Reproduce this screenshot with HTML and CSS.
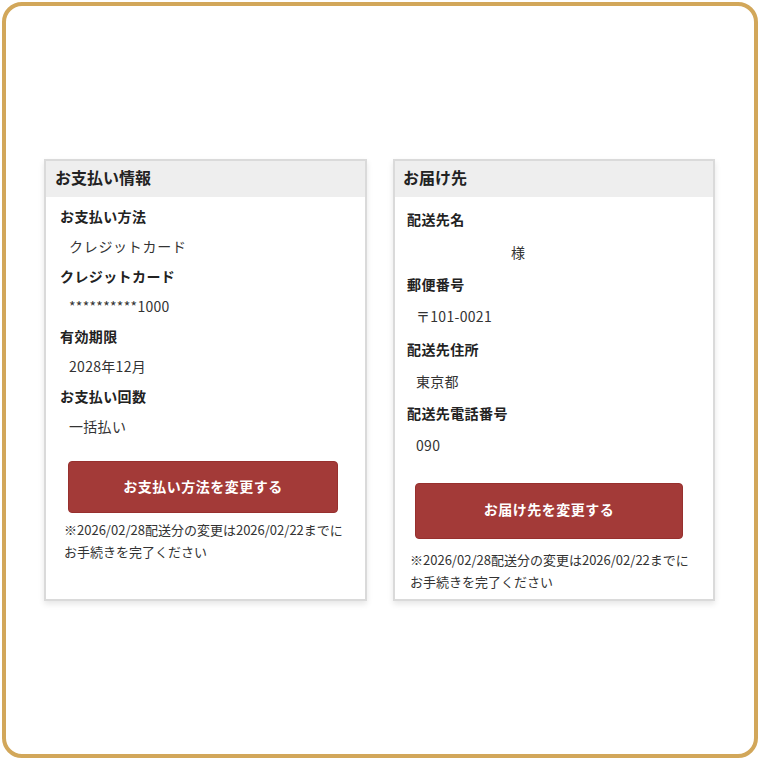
FILE: index.html
```html
<!DOCTYPE html>
<html lang="ja">
<head>
<meta charset="utf-8">
<link rel="stylesheet" href="styles.css">
</head>
<body>
<div class="frame">
  <div class="cards">
    <section class="card card--payment">
      <h2 class="card-head">お支払い情報</h2>
      <div class="card-body">
        <dl class="info">
          <dt>お支払い方法</dt>
          <dd class="kana">クレジットカード</dd>
          <dt>クレジットカード</dt>
          <dd>**********1000</dd>
          <dt>有効期限</dt>
          <dd>2028年12月</dd>
          <dt>お支払い回数</dt>
          <dd>一括払い</dd>
        </dl>
        <button class="btn" type="button">お支払い方法を変更する</button>
        <p class="note">※2026/02/28配送分の変更は2026/02/22までに<br>お手続きを完了ください</p>
      </div>
    </section>
    <section class="card card--delivery">
      <h2 class="card-head">お届け先</h2>
      <div class="card-body">
        <dl class="info">
          <dt>配送先名</dt>
          <dd><span class="name-blank"></span>様</dd>
          <dt>郵便番号</dt>
          <dd>〒101-0021</dd>
          <dt>配送先住所</dt>
          <dd>東京都</dd>
          <dt>配送先電話番号</dt>
          <dd>090</dd>
        </dl>
        <button class="btn" type="button">お届け先を変更する</button>
        <p class="note">※2026/02/28配送分の変更は2026/02/22までに<br>お手続きを完了ください</p>
      </div>
    </section>
  </div>
</div>
</body>
</html>
```

FILE: styles.css
```css
html, body {
  margin: 0;
  padding: 0;
  background: #ffffff;
}
body {
  font-family: "Noto Sans CJK JP", "Noto Sans", sans-serif;
  color: #333333;
}
.frame {
  box-sizing: border-box;
  margin: 2px;
  width: 756px;
  height: 756px;
  border: 4px solid #d2a75a;
  border-radius: 20px;
  display: flex;
  align-items: center;
  justify-content: center;
}
.cards {
  display: grid;
  grid-template-columns: 323px 322px;
  column-gap: 26px;
  margin-left: -1px;
}
.card {
  box-sizing: border-box;
  border: 2px solid #dadada;
  background: #fff;
  box-shadow: 0 3px 6px rgba(0, 0, 0, 0.10);
  display: flex;
  flex-direction: column;
}
.card-head {
  margin: 0;
  background: #eeeeee;
  font-size: 16px;
  font-weight: 700;
  color: #222;
  height: 36px;
  line-height: 33px;
  padding-left: 9px;
}
.card--delivery .card-head {
  padding-left: 8px;
}
.card-body {
  display: flex;
  flex-direction: column;
}
.info {
  margin: 0;
}
.info dt {
  font-size: 14px;
  font-weight: 700;
  color: #222;
  letter-spacing: 0.4px;
}
.info dd {
  margin: 0;
  padding-left: 9px;
  font-size: 14px;
  color: #333;
  letter-spacing: 0.3px;
}
.info dd.kana {
  letter-spacing: 0.7px;
}
.btn {
  box-sizing: border-box;
  border: 1px solid #97302e;
  background: #a33a38;
  color: #fff;
  font-family: inherit;
  font-size: 14px;
  font-weight: 700;
  letter-spacing: 0.5px;
  border-radius: 4px;
  padding: 0 0 3px;
}
.note {
  margin: 0;
  font-size: 13px;
  line-height: 22px;
  color: #333;
}

/* payment card */
.card--payment .card-body {
  padding: 4px 0 0 14px;
}
.card--payment .info dt,
.card--payment .info dd {
  line-height: 30px;
}
.card--payment .btn {
  margin: 20px 0 0 8px;
  width: 270px;
  height: 52px;
}
.card--payment .note {
  margin: 6px 0 0 4px;
}

/* delivery card */
.card--delivery .card-body {
  padding: 6px 0 6px 12px;
}
.card--delivery .info dt,
.card--delivery .info dd {
  line-height: 32.3px;
}
.card--delivery .btn {
  margin: 21px 0 0 8px;
  width: 268px;
  height: 56px;
}
.card--delivery .note {
  margin: 10px 0 0 3px;
}
.name-blank {
  display: inline-block;
  width: 95px;
}
```
